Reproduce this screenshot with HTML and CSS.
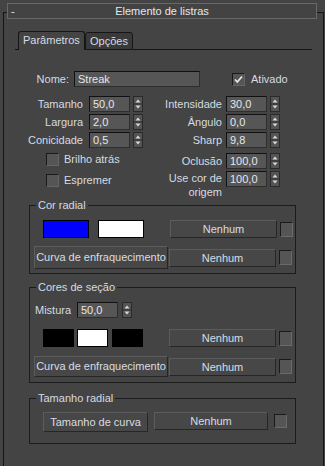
FILE: index.html
```html
<!DOCTYPE html>
<html lang="pt">
<head>
    <meta charset="UTF-8">
    <title>Elemento de listras</title>
    <link rel="stylesheet" href="styles.css">
</head>
<body>

    <div class="rollout-head">
        <span class="minus">-</span>
        <span class="title">Elemento de listras</span>
        <span class="minus"></span>
    </div>

    <div class="rollout">
        <div class="tabs">
            <div class="tab-lead"></div>
            <div class="tab active">Parâmetros</div>
            <div class="tab">Opções</div>
            <div class="tab-rest"></div>
        </div>

        <div class="name-row">
            <span class="lbl">Nome:</span>
            <div class="field name">Streak</div>
            <span class="check on">
                <svg width="11" height="11" viewBox="0 0 11 11"><path d="M2 5.5l2.3 2.5L9 2.5" fill="none" stroke="#e8e8e8" stroke-width="1.8"/></svg>
            </span>
            <span class="check-lbl">Ativado</span>
        </div>

        <div class="params">
            <div class="col-left">
                <div class="row"><span class="lbl">Tamanho</span><div class="field num">50,0</div><span class="spin"><svg width="10" height="16" viewBox="0 0 10 16"><rect x="0.5" y="0.5" width="9" height="15" fill="#545454" stroke="#2a2a2a"/><line x1="1" y1="8" x2="9" y2="8" stroke="#2a2a2a"/><path d="M2.5 6.5h5L5 3.5z" fill="#d8d8d8"/><path d="M2.5 9.5h5L5 12.5z" fill="#d8d8d8"/></svg></span></div>
                <div class="row"><span class="lbl">Largura</span><div class="field num">2,0</div><span class="spin"><svg width="10" height="16" viewBox="0 0 10 16"><rect x="0.5" y="0.5" width="9" height="15" fill="#545454" stroke="#2a2a2a"/><line x1="1" y1="8" x2="9" y2="8" stroke="#2a2a2a"/><path d="M2.5 6.5h5L5 3.5z" fill="#d8d8d8"/><path d="M2.5 9.5h5L5 12.5z" fill="#d8d8d8"/></svg></span></div>
                <div class="row"><span class="lbl">Conicidade</span><div class="field num">0,5</div><span class="spin"><svg width="10" height="16" viewBox="0 0 10 16"><rect x="0.5" y="0.5" width="9" height="15" fill="#545454" stroke="#2a2a2a"/><line x1="1" y1="8" x2="9" y2="8" stroke="#2a2a2a"/><path d="M2.5 6.5h5L5 3.5z" fill="#d8d8d8"/><path d="M2.5 9.5h5L5 12.5z" fill="#d8d8d8"/></svg></span></div>

                <div class="opt first"><span class="check"></span><span class="check-lbl">Brilho atrás</span></div>
                <div class="opt"><span class="check"></span><span class="check-lbl">Espremer</span></div>
            </div>

            <div class="col-right">
                <div class="row"><span class="lbl">Intensidade</span><div class="field num">30,0</div><span class="spin"><svg width="10" height="16" viewBox="0 0 10 16"><rect x="0.5" y="0.5" width="9" height="15" fill="#545454" stroke="#2a2a2a"/><line x1="1" y1="8" x2="9" y2="8" stroke="#2a2a2a"/><path d="M2.5 6.5h5L5 3.5z" fill="#d8d8d8"/><path d="M2.5 9.5h5L5 12.5z" fill="#d8d8d8"/></svg></span></div>
                <div class="row"><span class="lbl">Ângulo</span><div class="field num">0,0</div><span class="spin"><svg width="10" height="16" viewBox="0 0 10 16"><rect x="0.5" y="0.5" width="9" height="15" fill="#545454" stroke="#2a2a2a"/><line x1="1" y1="8" x2="9" y2="8" stroke="#2a2a2a"/><path d="M2.5 6.5h5L5 3.5z" fill="#d8d8d8"/><path d="M2.5 9.5h5L5 12.5z" fill="#d8d8d8"/></svg></span></div>
                <div class="row"><span class="lbl">Sharp</span><div class="field num">9,8</div><span class="spin"><svg width="10" height="16" viewBox="0 0 10 16"><rect x="0.5" y="0.5" width="9" height="15" fill="#545454" stroke="#2a2a2a"/><line x1="1" y1="8" x2="9" y2="8" stroke="#2a2a2a"/><path d="M2.5 6.5h5L5 3.5z" fill="#d8d8d8"/><path d="M2.5 9.5h5L5 12.5z" fill="#d8d8d8"/></svg></span></div>
                <div class="row occl"><span class="lbl">Oclusão</span><div class="field num">100,0</div><span class="spin"><svg width="10" height="16" viewBox="0 0 10 16"><rect x="0.5" y="0.5" width="9" height="15" fill="#545454" stroke="#2a2a2a"/><line x1="1" y1="8" x2="9" y2="8" stroke="#2a2a2a"/><path d="M2.5 6.5h5L5 3.5z" fill="#d8d8d8"/><path d="M2.5 9.5h5L5 12.5z" fill="#d8d8d8"/></svg></span></div>
                <div class="row tall"><span class="lbl">Use cor de<br>origem</span><div class="field num">100,0</div><span class="spin"><svg width="10" height="16" viewBox="0 0 10 16"><rect x="0.5" y="0.5" width="9" height="15" fill="#545454" stroke="#2a2a2a"/><line x1="1" y1="8" x2="9" y2="8" stroke="#2a2a2a"/><path d="M2.5 6.5h5L5 3.5z" fill="#d8d8d8"/><path d="M2.5 9.5h5L5 12.5z" fill="#d8d8d8"/></svg></span></div>
            </div>
        </div>

        <!-- Cor radial -->
        <fieldset class="group">
            <legend>Cor radial</legend>
            <div class="g-row swatches">
                <span class="swatch wide blue"></span>
                <span class="swatch wide white gap9"></span>
                <div class="btn none after-sw">Nenhum</div>
                <span class="mini"></span>
            </div>
            <div class="g-row curve-row">
                <div class="btn curve">Curva de enfraquecimento</div>
                <div class="btn none gap1">Nenhum</div>
                <span class="mini"></span>
            </div>
        </fieldset>

        <!-- Cores de seção -->
        <fieldset class="group sec">
            <legend>Cores de seção</legend>
            <div class="g-row mix">
                <span class="lbl">Mistura</span>
                <div class="field num">50,0</div>
                <span class="spin"><svg width="10" height="16" viewBox="0 0 10 16"><rect x="0.5" y="0.5" width="9" height="15" fill="#545454" stroke="#2a2a2a"/><line x1="1" y1="8" x2="9" y2="8" stroke="#2a2a2a"/><path d="M2.5 6.5h5L5 3.5z" fill="#d8d8d8"/><path d="M2.5 9.5h5L5 12.5z" fill="#d8d8d8"/></svg></span>
            </div>
            <div class="g-row swatches three">
                <span class="swatch small black"></span>
                <span class="swatch small white gap3"></span>
                <span class="swatch small black gap4"></span>
                <div class="btn none after-sw">Nenhum</div>
                <span class="mini"></span>
            </div>
            <div class="g-row curve-row short">
                <div class="btn curve">Curva de enfraquecimento</div>
                <div class="btn none gap1">Nenhum</div>
                <span class="mini"></span>
            </div>
        </fieldset>

        <!-- Tamanho radial -->
        <fieldset class="group rad">
            <legend>Tamanho radial</legend>
            <div class="g-row size-row">
                <div class="btn size">Tamanho de curva</div>
                <div class="btn none wide-none">Nenhum</div>
                <span class="mini"></span>
            </div>
        </fieldset>
    </div>

</body>
</html>
```

FILE: styles.css
```css
body {
    margin: 0;
    padding-top: 3px;
    height: 466px;
    box-sizing: border-box;
    overflow: hidden;
    background: #444444;
    font-family: "Liberation Sans", Arial, sans-serif;
    font-size: 11px;
    color: #d5dbe1;
}

/* barra do rollout */
.rollout-head {
    position: relative;
    z-index: 1;
    margin-left: 7px;
    width: 310px;
    height: 16px;
    box-sizing: border-box;
    border: 1px solid #686868;
    background: #434343;
    display: flex;
    align-items: center;
    color: #e6e9ec;
}

.minus {
    width: 20px;
    padding-left: 3px;
    box-sizing: border-box;
    line-height: 14px;
}

.title {
    flex: 1;
    text-align: center;
    line-height: 14px;
}

.rollout {
    margin: -7px 0 0 3px;
    width: 321px;
    height: 460px;
    box-sizing: border-box;
    border: 1px solid #141414;
    border-bottom: none;
    padding-top: 18px;
}

/* abas */
.tabs {
    display: flex;
    align-items: flex-end;
    margin: 0 11px;
    height: 19px;
}

.tab-lead {
    width: 3px;
    border-bottom: 1px solid #141414;
}

.tab {
    box-sizing: border-box;
    height: 18px;
    line-height: 16px;
    padding: 0 4px;
    border: 1px solid #161616;
    border-radius: 3px 3px 0 0;
    background: #3a3a3a;
    width: 48px;
}

.tab.active {
    height: 19px;
    width: 67px;
    border-bottom: none;
    background: #444444;
    line-height: 17px;
}

.tab-rest {
    flex: 1;
    border-bottom: 1px solid #141414;
}

/* campos */
.field {
    box-sizing: border-box;
    height: 16px;
    line-height: 14px;
    padding-left: 3px;
    background: #565656;
    border: 1px solid;
    border-color: #111111 #2e2e2e #2e2e2e #111111;
    color: #e4e7ea;
}

.spin {
    display: flex;
    margin-left: 3px;
}

.check {
    display: flex;
    align-items: center;
    justify-content: center;
    width: 13px;
    height: 13px;
    box-sizing: border-box;
    background: #555555;
    border: 1px solid;
    border-color: #1a1a1a #666666 #666666 #1a1a1a;
}

.check-lbl {
    margin-left: 5px;
}

.name-row {
    display: flex;
    align-items: center;
    height: 16px;
    margin-top: 21px;
}

.name-row .lbl {
    width: 65px;
    text-align: right;
}

.name-row .name {
    width: 126px;
    margin-left: 5px;
}

.name-row .check {
    margin-left: 32px;
}

.name-row .check-lbl {
    margin-left: 6px;
}

/* parametros */
.params {
    display: flex;
    margin-top: 9px;
    height: 102px;
}

.col-left {
    width: 142px;
}

.row {
    display: flex;
    align-items: center;
    height: 16px;
    margin-bottom: 2px;
}

.num {
    width: 41px;
}

.col-left .lbl {
    width: 79px;
    margin-right: 6px;
    text-align: right;
}

.col-right .lbl {
    width: 76px;
    margin-right: 4px;
    text-align: right;
}

.row.occl {
    margin-top: 5px;
}

.row.tall {
    margin-top: 1px;
    align-items: flex-start;
    height: auto;
}

.row.tall .lbl {
    line-height: 14px;
}

.opt {
    display: flex;
    align-items: center;
    margin-left: 42px;
    height: 14px;
    margin-top: 7px;
}

.opt.first {
    margin-top: 4px;
}

/* grupos */
.group {
    margin: 0 0 0 25px;
    width: 267px;
    box-sizing: border-box;
    padding: 0;
    min-width: 0;
    border: 1px solid #1c1c1c;
}

.group.sec {
    margin-top: 6px;
}

.group.rad {
    margin-top: 8px;
}

legend {
    margin-left: 6px;
    padding: 0 2px;
    line-height: 14px;
}

.g-row {
    display: flex;
    align-items: center;
}

.btn {
    box-sizing: border-box;
    border: 1px solid;
    border-color: #5c5c5c #262626 #262626 #5c5c5c;
    background: #474747;
    text-align: center;
    color: #d8dde3;
}

.none {
    width: 107px;
    height: 18px;
    line-height: 16px;
}

.mini {
    width: 13px;
    height: 15px;
    margin-left: 3px;
    box-sizing: border-box;
    background: #555555;
    border: 1px solid;
    border-color: #1a1a1a #6a6a6a #6a6a6a #1a1a1a;
}

.swatches {
    margin-top: 8px;
    padding-left: 13px;
    height: 18px;
}

.swatch {
    box-sizing: border-box;
    height: 18px;
    border: 1px solid #000000;
}

.swatch.wide { width: 46px; }
.swatch.small { width: 31px; }
.blue { background: #0000ff; }
.white { background: #ffffff; }
.black { background: #000000; }
.gap9 { margin-left: 9px; }
.gap3 { margin-left: 3px; }
.gap4 { margin-left: 4px; }
.gap1 { margin-left: 1px; }

.after-sw {
    margin-left: 26px;
}

.curve-row {
    margin-top: 8px;
    margin-bottom: 4px;
    padding-left: 4px;
}

.curve {
    width: 134px;
    height: 23px;
    line-height: 21px;
}

.curve-row.short {
    margin-top: 9px;
    margin-bottom: 5px;
}

.curve-row.short .curve {
    height: 21px;
    line-height: 19px;
}

.mix {
    margin-top: 8px;
    padding-left: 5px;
    height: 16px;
}

.mix .lbl {
    width: 42px;
}

.mix .spin {
    margin-left: 4px;
}

.swatches.three {
    margin-top: 11px;
}

.size-row {
    margin: 7px 0 11px;
    padding-left: 13px;
    align-items: flex-start;
}

.size {
    width: 105px;
    height: 20px;
    line-height: 18px;
}

.wide-none {
    width: 114px;
    margin-left: 6px;
}

.size-row .mini {
    margin: 2px 0 0 6px;
    height: 14px;
}
```
